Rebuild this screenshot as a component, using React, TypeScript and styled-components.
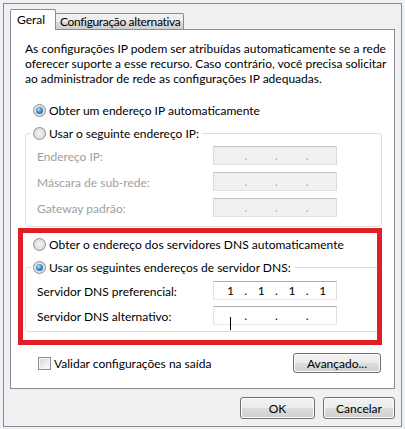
import styled, { createGlobalStyle, css } from 'styled-components';

const GlobalStyle = createGlobalStyle`
  html, body {
    margin: 0;
    padding: 0;
    background: #eef1f5;
  }
  body {
    font-family: Lato, 'Noto Sans', 'DejaVu Sans', sans-serif;
    font-size: 12px;
    color: #000;
  }
  * { box-sizing: border-box; }
`;

const Window = styled.div`
  margin: 3px 0 0 3px;
  width: 399px;
  height: 424px;
  border: 1px solid #8a8a8a;
  background: #f0f0f0;
  padding: 5px 6px 0 6px;
  display: flex;
  flex-direction: column;
`;

const TabStrip = styled.div`
  display: flex;
  align-items: flex-end;
  height: 20px;
`;

const Tab = styled.div<{ $active?: boolean }>`
  position: relative;
  border: 1px solid #898c95;
  border-bottom: none;
  border-radius: 2px 2px 0 0;
  padding: 0 6px;
  white-space: nowrap;
  overflow: hidden;
  line-height: 14px;
  ${p => p.$active ? css`
    z-index: 1;
    height: 21px;
    margin-bottom: -1px;
    width: 46px;
    padding-top: 3px;
    background: #fff;
  ` : css`
    height: 16px;
    margin-left: -1px;
    width: 129px;
    padding-top: 1px;
    padding-left: 4px;
    letter-spacing: -0.35px;
    background: linear-gradient(#f2f2f2 0%, #ebebeb 50%, #dddddd 51%, #cfcfcf 100%);
  `}
`;

const Panel = styled.div`
  height: 360px;
  border: 1px solid #898c95;
  background: #fff;
  display: flex;
  flex-direction: column;
  padding: 0 13px 0 14px;
`;

const Intro = styled.p`
  margin: 11px 0 0 0;
  line-height: 15px;
  white-space: nowrap;
`;

const RadioRow = styled.label<{ $disabled?: boolean }>`
  display: flex;
  align-items: center;
  gap: 3px;
  height: 17px;
  white-space: nowrap;
  color: ${p => (p.$disabled ? '#a0a0a0' : '#000')};
`;

const Radio = styled.span<{ $checked?: boolean }>`
  position: relative;
  width: 13px;
  height: 13px;
  border-radius: 50%;
  border: 1px solid #8e8f8f;
  background: radial-gradient(circle at 50% 50%, #f4f4f4 0%, #e2e2e2 55%, #cfcfcf 100%);
  flex: none;
  ${p => p.$checked && css`
    &::after {
      content: '';
      position: absolute;
      left: 2px;
      top: 2px;
      width: 7px;
      height: 7px;
      border-radius: 50%;
      background: radial-gradient(circle at 40% 35%, #b6e3ff 0%, #3d8fd0 45%, #174d86 100%);
    }
  `}
`;

const FirstRadio = styled.div`
  margin: 16px 0 0 8px;
`;

const AutoDns = styled.div`
  margin: 9px 0 0 8px;
`;

const Group = styled.fieldset<{ $top: number; $pt: number; $pb: number; $gap: number }>`
  margin: ${p => p.$top}px 0 0 0;
  width: 357px;
  border: 1px solid #d9dfe3;
  border-radius: 3px;
  padding: ${p => p.$pt}px 44px ${p => p.$pb}px 11px;
  display: grid;
  grid-template-columns: 1fr 124px;
  row-gap: ${p => p.$gap}px;
  align-items: center;
`;

const Legend = styled.legend`
  margin-left: -6px;
  padding: 0 3px 0 2px;
`;

const FieldLabel = styled.span<{ $disabled?: boolean }>`
  color: ${p => (p.$disabled ? '#a0a0a0' : '#000')};
  padding-top: 2px;
`;

const IpBox = styled.div<{ $disabled?: boolean }>`
  height: 19px;
  display: flex;
  align-items: center;
  padding-left: 3px;
  border: 1px solid;
  ${p => p.$disabled ? css`
    background: #f0f0f0;
    border-color: #c2c2c2 #dadada #e2e2e2 #dadada;
    color: #a0a0a0;
  ` : css`
    background: #fff;
    border-color: #abadb3 #dbdfe6 #e3e9ef #e2e3ea;
    color: #000;
  `}
`;

const Octet = styled.span`
  position: relative;
  width: 27px;
  text-align: center;
  line-height: 15px;
`;

const Dot = styled.span`
  width: 4px;
  text-align: center;
  line-height: 15px;
`;

const Caret = styled.span`
  position: absolute;
  left: 13px;
  top: 1px;
  width: 1px;
  height: 13px;
  background: #000;
`;

const DnsSection = styled.div`
  position: relative;
`;

const Highlight = styled.div`
  position: absolute;
  left: -7px;
  top: 1px;
  width: 364px;
  height: 117px;
  border: 5px solid #dd1f27;
  pointer-events: none;
`;

const BottomRow = styled.div`
  margin-top: 21px;
  display: flex;
  align-items: center;
  justify-content: space-between;
  padding-left: 13px;
`;

const CheckRow = styled.label`
  display: flex;
  align-items: center;
  gap: 3px;
`;

const Checkbox = styled.span`
  width: 13px;
  height: 13px;
  border: 1px solid #8e8f8f;
  background: linear-gradient(135deg, #d4d4d4 0%, #eeeeee 60%, #fbfbfb 100%);
  box-shadow: inset 0 0 0 1px #f4f4f4;
`;

const Button = styled.button<{ $w: number; $h: number }>`
  width: ${p => p.$w}px;
  height: ${p => p.$h}px;
  border: 1px solid #707070;
  border-radius: 3px;
  font: inherit;
  color: #000;
  padding: 0;
  background: linear-gradient(#f2f2f2 0%, #ebebeb 50%, #dddddd 51%, #cfcfcf 100%);
  box-shadow: inset 0 0 0 1px #fcfcfc;
`;

const Footer = styled.div`
  display: flex;
  justify-content: flex-end;
  gap: 8px;
  padding-top: 8px;
`;

function IpField({ values, disabled, caret }: { values: string[]; disabled?: boolean; caret?: boolean }) {
  return (
    <IpBox $disabled={disabled}>
      {values.map((v, i) => (
        <>
          <Octet key={'o' + i}>
            {v}
            {caret && i === 0 && <Caret />}
          </Octet>
          {i < 3 && <Dot key={'d' + i}>.</Dot>}
        </>
      ))}
    </IpBox>
  );
}

export default function App() {
  const empty = ['', '', '', ''];
  return (
    <>
      <GlobalStyle />
      <Window>
        <TabStrip>
          <Tab $active>Geral</Tab>
          <Tab>Configuração alternativa</Tab>
        </TabStrip>
        <Panel>
          <Intro>
            As configurações IP podem ser atribuídas automaticamente se a rede<br />
            oferecer suporte a esse recurso. Caso contrário, você precisa solicitar<br />
            ao administrador de rede as configurações IP adequadas.
          </Intro>

          <FirstRadio>
            <RadioRow><Radio $checked />Obter um endereço IP automaticamente</RadioRow>
          </FirstRadio>

          <Group $top={6} $pt={4} $pb={9} $gap={7}>
            <Legend>
              <RadioRow><Radio />Usar o seguinte endereço IP:</RadioRow>
            </Legend>
            <FieldLabel $disabled>Endereço IP:</FieldLabel>
            <IpField values={empty} disabled />
            <FieldLabel $disabled>Máscara de sub-rede:</FieldLabel>
            <IpField values={empty} disabled />
            <FieldLabel $disabled>Gateway padrão:</FieldLabel>
            <IpField values={empty} disabled />
          </Group>

          <DnsSection>
            <AutoDns>
              <RadioRow><Radio />Obter o endereço dos servidores DNS automaticamente</RadioRow>
            </AutoDns>
            <Group $top={6} $pt={5} $pb={6} $gap={6}>
              <Legend>
                <RadioRow><Radio $checked />Usar os seguintes endereços de servidor DNS:</RadioRow>
              </Legend>
              <FieldLabel>Servidor DNS preferencial:</FieldLabel>
              <IpField values={['1', '1', '1', '1']} />
              <FieldLabel>Servidor DNS alternativo:</FieldLabel>
              <IpField values={empty} caret />
            </Group>
            <Highlight />
          </DnsSection>

          <BottomRow>
            <CheckRow><Checkbox />Validar configurações na saída</CheckRow>
            <Button $w={88} $h={20}>Avançado...</Button>
          </BottomRow>
        </Panel>
        <Footer>
          <Button $w={75} $h={22}>OK</Button>
          <Button $w={72} $h={22}>Cancelar</Button>
        </Footer>
      </Window>
    </>
  );
}
